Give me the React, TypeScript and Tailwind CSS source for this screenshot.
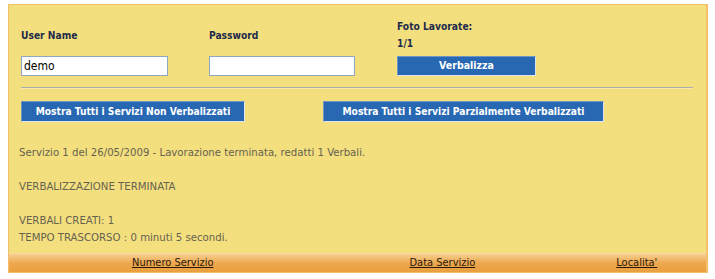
import React from "react";

const cond = { fontFamily: '"DejaVu Sans Condensed", "DejaVu Sans", sans-serif' };

export default function App() {
  return (
    <div className="w-[715px] h-[279px] bg-white pt-[4px] pl-[8px]" style={cond}>
      <div className="w-[700px] border border-[#f3bf6a] border-r-2 bg-[#f4df7f]">
        <div className="h-[248px] pl-[12px] pr-[13px]">
          {/* top form row */}
          <div className="flex items-end pt-[13px]">
            <div className="w-[188px] flex flex-col">
              <span className="text-[10.2px] font-bold text-[#1e2b4a] leading-[17px]">User Name</span>
              <input
                readOnly
                value="demo"
                className="mt-[12px] w-[147px] h-[20px] border border-[#8ea8c4] bg-white px-[2px] text-[12px] text-black outline-none"
                style={cond}
              />
            </div>
            <div className="w-[188px] flex flex-col">
              <span className="text-[10.2px] font-bold text-[#1e2b4a] leading-[17px]">Password</span>
              <input
                readOnly
                value=""
                className="mt-[12px] w-[146px] h-[20px] border border-[#8ea8c4] bg-white px-[2px] text-[12px] outline-none"
                style={cond}
              />
            </div>
            <div className="flex flex-col">
              <span className="text-[10.2px] font-bold text-[#1e2b4a] leading-[17px]">Foto Lavorate:</span>
              <span className="text-[10.2px] font-bold text-[#1e2b4a] leading-[17px]">1/1</span>
              <button className="mt-[4px] w-[139px] h-[20px] bg-[#2868b3] border border-[#dde6ef] border-t-[#6d95c6] border-l-[#6d95c6] text-white text-[10.5px] font-bold">
                Verbalizza
              </button>
            </div>
          </div>
          {/* separator */}
          <div className="mt-[11px] h-[2px] border-t border-[#a8acb0] bg-[#f7eaa8]" />
          {/* buttons row */}
          <div className="flex mt-[12px] gap-[78px]">
            <button className="w-[224px] h-[21px] bg-[#2868b3] border border-[#dde6ef] border-t-[#6d95c6] border-l-[#6d95c6] text-white text-[10.2px] font-bold">
              Mostra Tutti i Servizi Non Verbalizzati
            </button>
            <button className="w-[281px] h-[21px] bg-[#2868b3] border border-[#dde6ef] border-t-[#6d95c6] border-l-[#6d95c6] text-white text-[10.2px] font-bold">
              Mostra Tutti i Servizi Parzialmente Verbalizzati
            </button>
          </div>
          {/* messages */}
          <div className="mt-[22px] -ml-[2px] text-[11.3px] leading-[17px] text-[#66624f]">
            <div>Servizio 1 del 26/05/2009 - Lavorazione terminata, redatti 1 Verbali.</div>
            <div className="h-[17px]" />
            <div>VERBALIZZAZIONE TERMINATA</div>
            <div className="h-[17px]" />
            <div>VERBALI CREATI: 1</div>
            <div>TEMPO TRASCORSO : 0 minuti 5 secondi.</div>
          </div>
        </div>
        {/* footer */}
        <div className="h-[19px] border-t border-[#f6dca0] bg-gradient-to-b from-[#f6cf8f] via-[#eda84e] to-[#e99f3e] flex items-center text-[11px] text-[#2a180c]">
          <span className="ml-[123px] underline">Numero Servizio</span>
          <span className="ml-[196px] underline">Data Servizio</span>
          <span className="ml-[141px] underline">Localita'</span>
        </div>
      </div>
    </div>
  );
}
